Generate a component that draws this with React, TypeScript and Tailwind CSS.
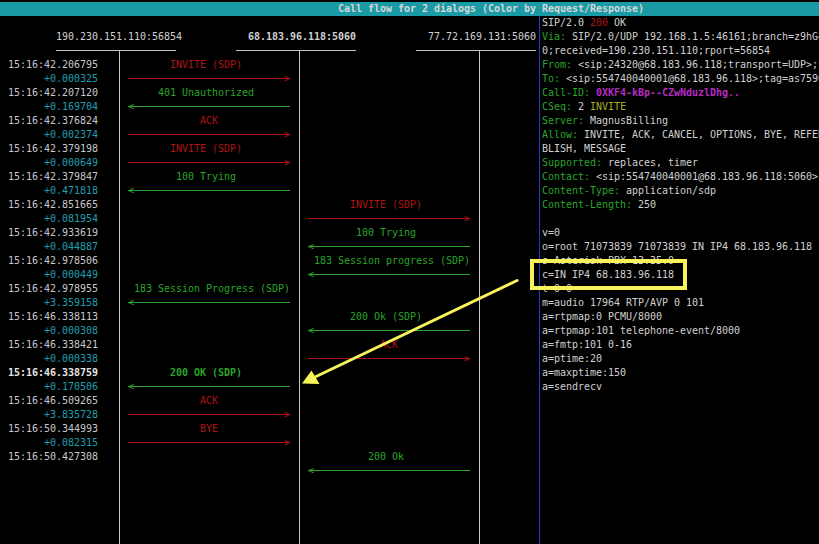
import React from "react";

type Msg = {
  ts: string;
  d: string;
  label: string;
  slot: "A" | "B";
  dir: "r" | "l";
  red: boolean;
  lp: string;
  bold?: boolean;
};

const msgs: Msg[] = [
  { ts: "15:16:42.206795", d: "+0.000325", label: "INVITE (SDP)", slot: "A", dir: "r", red: true, lp: "pl-[48px]" },
  { ts: "15:16:42.207120", d: "+0.169704", label: "401 Unauthorized", slot: "A", dir: "l", red: false, lp: "pl-[36px]" },
  { ts: "15:16:42.376824", d: "+0.002374", label: "ACK", slot: "A", dir: "r", red: true, lp: "pl-[78px]" },
  { ts: "15:16:42.379198", d: "+0.000649", label: "INVITE (SDP)", slot: "A", dir: "r", red: true, lp: "pl-[48px]" },
  { ts: "15:16:42.379847", d: "+0.471818", label: "100 Trying", slot: "A", dir: "l", red: false, lp: "pl-[54px]" },
  { ts: "15:16:42.851665", d: "+0.081954", label: "INVITE (SDP)", slot: "B", dir: "r", red: true, lp: "pl-[48px]" },
  { ts: "15:16:42.933619", d: "+0.044887", label: "100 Trying", slot: "B", dir: "l", red: false, lp: "pl-[54px]" },
  { ts: "15:16:42.978506", d: "+0.000449", label: "183 Session progress (SDP)", slot: "B", dir: "l", red: false, lp: "pl-[12px]" },
  { ts: "15:16:42.978955", d: "+3.359158", label: "183 Session Progress (SDP)", slot: "A", dir: "l", red: false, lp: "pl-[12px]" },
  { ts: "15:16:46.338113", d: "+0.000308", label: "200 Ok (SDP)", slot: "B", dir: "l", red: false, lp: "pl-[48px]" },
  { ts: "15:16:46.338421", d: "+0.000338", label: "ACK", slot: "B", dir: "r", red: true, lp: "pl-[78px]" },
  { ts: "15:16:46.338759", d: "+0.170506", label: "200 OK (SDP)", slot: "A", dir: "l", red: false, lp: "pl-[48px]", bold: true },
  { ts: "15:16:46.509265", d: "+3.835728", label: "ACK", slot: "A", dir: "r", red: true, lp: "pl-[78px]" },
  { ts: "15:16:50.344993", d: "+0.082315", label: "BYE", slot: "A", dir: "r", red: true, lp: "pl-[78px]" },
  { ts: "15:16:50.427308", d: "", label: "200 Ok", slot: "B", dir: "l", red: false, lp: "pl-[66px]" },
];

const GREEN = "text-[#2aa52a]";
const RED = "text-[#b01414]";

function Lifeline({ color }: { color: string }) {
  return (
    <div className="w-[6px] pl-[3px] flex">
      <div className={`w-px h-full ${color}`} />
    </div>
  );
}

function SlotColumn({ slot }: { slot: "A" | "B" }) {
  return (
    <div className="w-[174px] flex flex-col">
      {msgs.map((m, i) => {
        if (m.slot !== slot) return <div key={i} className="h-[28px]" />;
        const txt = m.red ? RED : GREEN;
        const bg = m.red ? "bg-[#a81212]" : "bg-[#2aa52a]";
        return (
          <div key={i} className="flex flex-col">
            <div className={`h-[14px] whitespace-pre ${m.lp} ${txt} ${m.bold ? "font-bold" : ""}`}>{m.label}</div>
            <div className={`h-[14px] flex items-start pl-[6px] ${txt}`}>
              {m.dir === "r" ? (
                <>
                  <div className={`w-[162px] h-px mt-[6px] ${bg}`} />
                  <span className="-ml-[6px] w-[6px]">&gt;</span>
                </>
              ) : (
                <>
                  <span className="w-[6px]">&lt;</span>
                  <div className={`-ml-[6px] w-[162px] h-px mt-[6px] ${bg}`} />
                </>
              )}
            </div>
          </div>
        );
      })}
    </div>
  );
}

function Underline() {
  return (
    <div className="w-[120px] h-[14px] flex flex-col pt-[6px]">
      <div className="h-px bg-[#c4c4c4]" />
      <div className="ml-[63px] w-px flex-1 bg-[#c4c4c4]" />
    </div>
  );
}

function H({ children }: { children: React.ReactNode }) {
  return <span className={GREEN}>{children}</span>;
}

export default function App() {
  return (
    <div className="relative w-[819px] h-[544px] overflow-hidden bg-black pt-[2px] flex flex-col font-['DejaVu_Sans_Mono',monospace] text-[10px] leading-[14px] tracking-[-0.02px] text-[#d0d0d0]">
      <div className="h-[14px] shrink-0 bg-[#199aa5] pl-[338px] font-bold text-[#d6d6d6] whitespace-pre">
        Call flow for 2 dialogs (Color by Request/Response)
      </div>
      <div className="flex-1 min-h-0 flex">
        {/* Left pane: call flow */}
        <div className="w-[536px] shrink-0 flex flex-col">
          <div className="h-[14px]" />
          <div className="h-[14px] flex whitespace-pre">
            <span className="ml-[56px] w-[126px]">190.230.151.110:56854</span>
            <span className="ml-[66px] w-[108px] font-bold">68.183.96.118:5060</span>
            <span className="ml-[72px]">77.72.169.131:5060</span>
          </div>
          <div className="h-[14px] flex">
            <div className="ml-[56px]">
              <Underline />
            </div>
            <div className="ml-[60px]">
              <Underline />
            </div>
            <div className="ml-[60px]">
              <Underline />
            </div>
          </div>
          <div className="flex-1 flex">
            <div className="w-[116px] pl-[8px] flex flex-col">
              {msgs.map((m, i) => (
                <div key={i} className="flex flex-col w-[90px]">
                  <div className={`h-[14px] ${m.bold ? "font-bold text-[#e6e6e6]" : "text-[#c8c8c8]"}`}>{m.ts}</div>
                  <div className="h-[14px] text-right text-[#1f9fae]">{m.d}</div>
                </div>
              ))}
            </div>
            <Lifeline color="bg-[#c4c4c4]" />
            <SlotColumn slot="A" />
            <Lifeline color="bg-[#c4c4c4]" />
            <SlotColumn slot="B" />
            <Lifeline color="bg-[#c4c4c4]" />
            <div className="flex-1" />
          </div>
        </div>
        {/* Divider */}
        <Lifeline color="bg-[#3434c8]" />
        {/* Right pane: message detail */}
        <div className="flex-1 min-w-0 overflow-hidden whitespace-pre">
          <div>SIP/2.0 <span className={RED}>200</span> OK</div>
          <div><H>Via:</H> SIP/2.0/UDP 192.168.1.5:46161;branch=z9hG4bK-524287-1---c1f2e3a4b5d6</div>
          <div>0;received=190.230.151.110;rport=56854</div>
          <div><H>From:</H> {"<sip:24320@68.183.96.118;transport=UDP>;tag=8c1b0e2f"}</div>
          <div><H>To:</H> {"<sip:554740040001@68.183.96.118>;tag=as7590c4e1"}</div>
          <div><H>Call-ID:</H> <span className="font-bold text-[#b52cc0]">0XKF4-kBp--CZwNduzlDhg..</span></div>
          <div><H>CSeq:</H> 2 <span className="text-[#aaaa2a]">INVITE</span></div>
          <div><H>Server:</H> MagnusBilling</div>
          <div><H>Allow:</H> INVITE, ACK, CANCEL, OPTIONS, BYE, REFER, SUBSCRIBE, NOTIFY, INFO, PU</div>
          <div>BLISH, MESSAGE</div>
          <div><H>Supported:</H> replaces, timer</div>
          <div><H>Contact:</H> {"<sip:554740040001@68.183.96.118:5060>"}</div>
          <div><H>Content-Type:</H> application/sdp</div>
          <div><H>Content-Length:</H> 250</div>
          <div>&nbsp;</div>
          <div>v=0</div>
          <div>o=root 71073839 71073839 IN IP4 68.183.96.118</div>
          <div>s=Asterisk PBX 13.35.0</div>
          <div>c=IN IP4 68.183.96.118</div>
          <div>t=0 0</div>
          <div>m=audio 17964 RTP/AVP 0 101</div>
          <div>a=rtpmap:0 PCMU/8000</div>
          <div>a=rtpmap:101 telephone-event/8000</div>
          <div>a=fmtp:101 0-16</div>
          <div>a=ptime:20</div>
          <div>a=maxptime:150</div>
          <div>a=sendrecv</div>
        </div>
      </div>
      {/* Annotation overlay */}
      <svg className="absolute inset-0 pointer-events-none" width="819" height="544" viewBox="0 0 819 544">
        <rect x="532" y="261" width="153" height="27" fill="none" stroke="#f8f35a" strokeWidth="4" />
        <line x1="517" y1="280.5" x2="314" y2="377.5" stroke="#f8f35a" strokeWidth="3" strokeLinecap="round" />
        <polygon points="302,383.5 311.5,370.5 319.5,384" fill="#f8f35a" />
      </svg>
    </div>
  );
}
